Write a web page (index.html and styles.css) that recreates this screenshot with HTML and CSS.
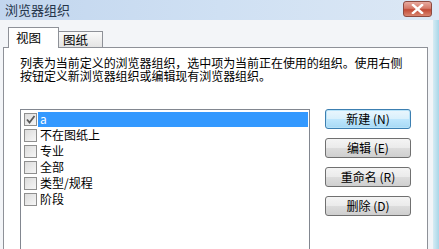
FILE: index.html
```html
<!DOCTYPE html>
<html lang="zh-CN">
<head>
<meta charset="utf-8">
<title>浏览器组织</title>
<link rel="stylesheet" href="styles.css">
</head>
<body>
<div class="window">
  <div class="titlebar">
    <span class="title">浏览器组织</span>
    <button class="close" aria-label="关闭">
      <svg width="13" height="10" viewBox="0 0 13 10"><path d="M2 1 L11 9 M11 1 L2 9" stroke="#fff" stroke-width="2.4" stroke-linecap="square"/></svg>
    </button>
  </div>
  <div class="frame">
    <div class="content">
      <div class="tabs">
        <div class="tab active">视图</div>
        <div class="tab">图纸</div>
      </div>
      <div class="panel">
        <p class="desc">列表为当前定义的浏览器组织，选中项为当前正在使用的组织。使用右侧<br>按钮定义新浏览器组织或编辑现有浏览器组织。</p>
        <div class="main">
          <ul class="list">
            <li class="row"><span class="cb checked"><svg width="11" height="11" viewBox="0 0 11 11"><path d="M2 5.5 L4.5 8.5 L9.5 2" fill="none" stroke="#5a5a5a" stroke-width="1.8"/></svg></span><span class="label sel">a</span></li>
            <li class="row"><span class="cb"></span><span class="label">不在图纸上</span></li>
            <li class="row"><span class="cb"></span><span class="label">专业</span></li>
            <li class="row"><span class="cb"></span><span class="label">全部</span></li>
            <li class="row"><span class="cb"></span><span class="label">类型/规程</span></li>
            <li class="row"><span class="cb"></span><span class="label">阶段</span></li>
          </ul>
          <div class="buttons">
            <button class="btn default">新建 (N)</button>
            <button class="btn">编辑 (E)</button>
            <button class="btn">重命名 (R)</button>
            <button class="btn">删除 (D)</button>
          </div>
        </div>
      </div>
    </div>
    <div class="edge"></div>
  </div>
</div>
</body>
</html>
```
FILE: styles.css
```css
* { box-sizing: border-box; }
html, body { margin: 0; padding: 0; }
body {
  width: 439px;
  height: 249px;
  overflow: hidden;
  font-family: "Noto Sans CJK SC", "DejaVu Sans", sans-serif;
  font-size: 12px;
  color: #000;
  background: #f3f5f8;
}
.window {
  display: flex;
  flex-direction: column;
  width: 439px;
  height: 249px;
}
.titlebar {
  height: 20px;
  flex: none;
  display: flex;
  align-items: flex-start;
  justify-content: space-between;
  background: linear-gradient(to right, #c2d6ee 0%, #cfe0f3 50%, #dce8f5 100%);
  padding-left: 5px;
}
.title {
  font-size: 13px;
  line-height: 20px;
  color: #25354a;
}
.close {
  margin: 1px 7px 0 0;
  width: 29px;
  height: 16px;
  padding: 0;
  border: 1px solid #8d4a40;
  border-radius: 3px;
  background: linear-gradient(to bottom, #e8aba0 0%, #d57a69 45%, #c24a36 55%, #d9856f 100%);
  display: flex;
  align-items: center;
  justify-content: center;
}
.frame {
  flex: 1;
  display: flex;
  min-height: 0;
}
.content {
  flex: 1;
  display: flex;
  flex-direction: column;
  padding: 7px 5px 0 3px;
  background: #f3f5f8;
}
.edge {
  width: 6px;
  flex: none;
  background: linear-gradient(to right, #d6ecf4, #a9d6e8);
}
.tabs {
  display: flex;
  align-items: flex-end;
  height: 20px;
  padding-left: 5px;
  position: relative;
  z-index: 1;
}
.tab {
  height: 16px;
  width: 44px;
  border: 1px solid #8e9198;
  border-bottom: none;
  border-left: none;
  background: linear-gradient(to bottom, #fafafa, #e4e4e4);
  font-size: 12.5px;
  line-height: 15px;
  padding-left: 4px;
}
.tab.active {
  height: 21px;
  width: 51px;
  margin-bottom: -1px;
  border-left: 1px solid #8e9198;
  background: #fff;
  padding-left: 7px;
  line-height: 19px;
  font-size: 12.5px;
}
.panel {
  flex: 1;
  border: 1px solid #8e9198;
  border-bottom: none;
  background: #fff;
  padding: 8px 0 0 16px;
  display: flex;
  flex-direction: column;
}
.desc {
  margin: 0;
  line-height: 13px;
  font-size: 12px;
  letter-spacing: -0.05px;
}
.main {
  display: flex;
  align-items: flex-start;
  margin-top: 27px;
  flex: 1;
}
.list {
  list-style: none;
  margin: 0;
  padding: 1px 1px 0 3px;
  width: 290px;
  align-self: stretch;
  border: 1px solid #828790;
  border-bottom: none;
}
.row {
  display: flex;
  align-items: center;
  height: 16px;
}
.cb {
  width: 13px;
  height: 13px;
  flex: none;
  border: 1px solid #8f8f8f;
  background: linear-gradient(135deg, #dcdcdc, #f6f6f6);
  display: flex;
  align-items: center;
  justify-content: center;
}
.label {
  padding-left: 2px;
  margin-left: 1px;
  line-height: 16px;
  font-size: 12px;
}
.label.sel {
  flex: 1;
  background: #3399ff;
  color: #fff;
  height: 15px;
  line-height: 14px;
}
.buttons {
  display: flex;
  flex-direction: column;
  gap: 9px;
  margin-left: 15px;
}
.btn {
  width: 86px;
  height: 20px;
  padding: 0;
  border: 1px solid #707070;
  border-radius: 3px;
  background: linear-gradient(to bottom, #f4f4f4 0%, #ebebeb 48%, #dcdcdc 52%, #cfcfcf 100%);
  font-family: "Noto Sans CJK SC", "DejaVu Sans", sans-serif;
  font-size: 12px;
  line-height: 18px;
  color: #000;
}
.btn.default {
  border-color: #3c7fb1;
  background: linear-gradient(to bottom, #eaf6fd 0%, #d9f0fc 48%, #bee6fd 52%, #a7d9f5 100%);
  box-shadow: inset 0 0 0 1px #b8e3f9;
}
```
